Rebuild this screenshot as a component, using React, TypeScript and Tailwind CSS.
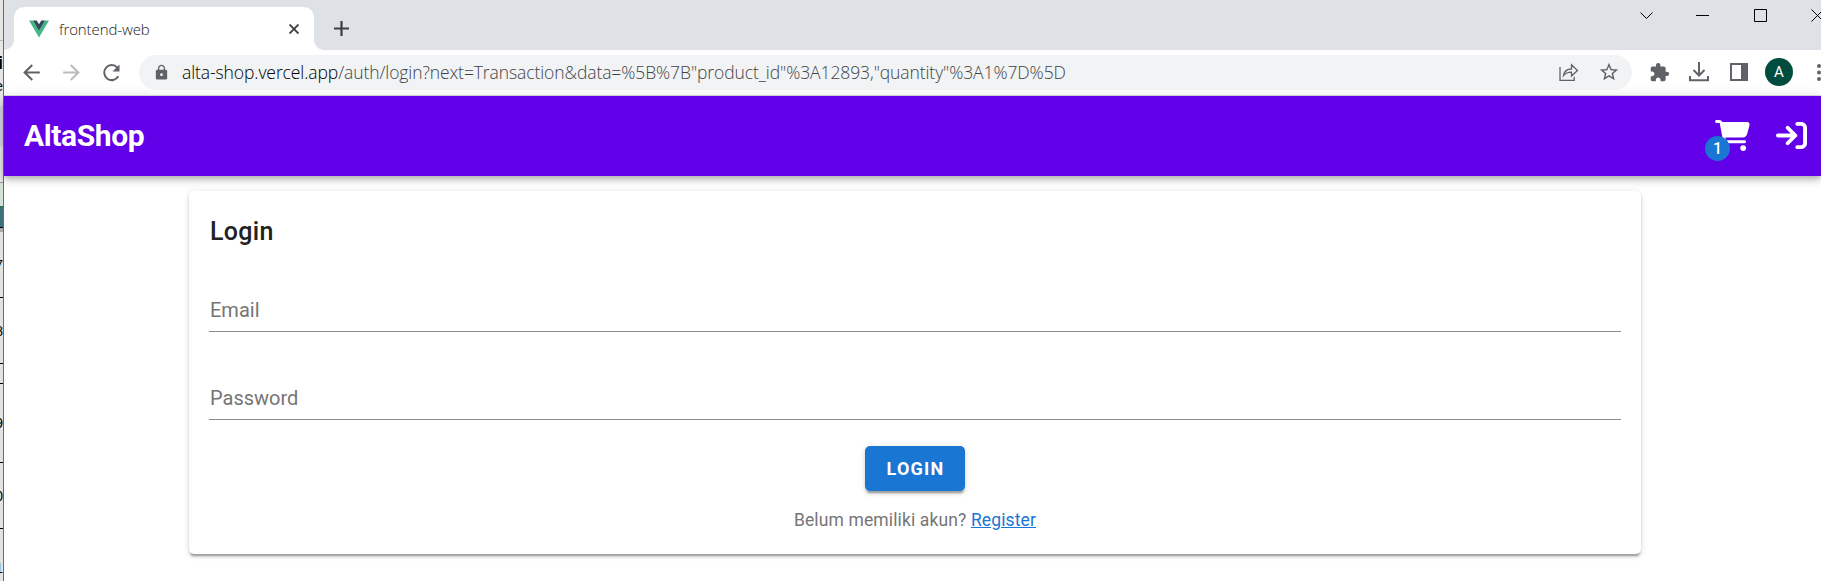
import { FaCartShopping, FaArrowRightToBracket } from "react-icons/fa6";
import { MdArrowBack, MdArrowForward, MdLock, MdStarBorder, MdExtension } from "react-icons/md";

const roboto = "font-['Roboto',sans-serif]";

function BackgroundWindow() {
  return (
    <div className="flex h-[581px] w-1 shrink-0 flex-col overflow-hidden border-r border-[#6b6b6b] bg-[#e4e3e1] font-['Liberation_Sans',sans-serif] text-[14px] leading-5 text-black">
      <div className="h-10 shrink-0 bg-[#e6e4e2]" />
      <div className="h-px shrink-0 bg-[#b5b5b5]" />
      <div className="flex h-[65px] shrink-0 flex-col items-end bg-[#e6e6e6] pt-[10px]">
        <span className="text-[18px] font-bold leading-[24px]">i</span>
        <span className="leading-[22px]">e</span>
      </div>
      <div className="h-10 shrink-0 bg-[#d3d7e0]" />
      <div className="h-9 shrink-0 bg-[#e6e6e6]" />
      <div className="h-px shrink-0 bg-[#9a9a9a]" />
      <div className="h-[23px] shrink-0 bg-[#d3e2d6]" />
      <div className="h-[21px] shrink-0 border-t border-[#1e7145] bg-[#40707a]" />
      <div className="h-px shrink-0 bg-black" />
      <div className="h-1 shrink-0 bg-[#aaa]" />
      <div className="flex h-[66px] shrink-0 items-center justify-end border-b border-black">7</div>
      <div className="flex h-[66px] shrink-0 items-center justify-end border-b border-black">8</div>
      <div className="h-5 shrink-0 border-b border-black" />
      <div className="flex h-[79px] shrink-0 items-center justify-end border-b border-black">9</div>
      <div className="flex h-[66px] shrink-0 items-center justify-end border-b border-black">0</div>
      <div className="flex h-[52px] shrink-0 items-end justify-end pb-[3px]">1</div>
    </div>
  );
}

function TabStrip() {
  return (
    <div className="flex h-[50px] bg-[#dee1e6]">
      <div className="flex w-[10px] items-end bg-white">
        <div className="h-full w-full rounded-br-[10px] bg-[#dee1e6]" />
      </div>
      <div className="bg-[#dee1e6]">
        <div className="flex h-[50px] w-[300px] items-center bg-white pt-2 [clip-path:inset(7px_0_0_0_round_10px_10px_0_0)]">
          <svg className="ml-[15px] h-5 w-5" viewBox="0 0 20 20">
            <path d="M0 1.500h4L10 12l6-10.500h4L10 18.500z" fill="#41b883" />
            <path d="M4 1.500h3.700L10 5.300l2.300-3.800H16L10 12z" fill="#35495e" />
          </svg>
          <span className="ml-[10px] flex-1 whitespace-nowrap font-['Open_Sans',sans-serif] text-[15px] font-light tracking-[-0.1px] text-[#202124]">frontend-web</span>
          <svg className="mr-[15px] h-[10px] w-[10px]" viewBox="0 0 10 10" stroke="#3c4043" strokeWidth="1.900">
            <path d="M.5.5l9 9M9.500.5l-9 9" />
          </svg>
        </div>
      </div>
      <div className="flex flex-1 bg-white">
        <div className="flex flex-1 rounded-bl-[10px] bg-[#dee1e6]">
          <svg className="ml-5 mt-[21px] h-[15px] w-[15px]" viewBox="0 0 15 15" stroke="#3c4043" strokeWidth="2.200">
            <path d="M0 7.500h15M7.500 0v15" />
          </svg>
          <svg className="ml-auto mt-[8px] h-4 w-[181px]" viewBox="0 0 181 16" fill="none" stroke="#000" strokeWidth="1">
            <path d="M.5 4.500l6 6 6-6" />
            <path d="M56 7.500h13" />
            <path d="M114.500 1.500h12v12h-12z" />
            <path d="M171.500 1.500l12 12M171.500 13.500l12-12" />
          </svg>
        </div>
      </div>
    </div>
  );
}

function Toolbar() {
  return (
    <div className="flex h-[46px] items-center border-b border-[#dadce0] bg-white pb-px text-[#5f6368]">
      <MdArrowBack className="ml-[15px] h-[25px] w-[25px] shrink-0" />
      <MdArrowForward className="ml-[15px] h-[25px] w-[25px] shrink-0 text-[#babcbe]" />
      <svg className="ml-[15px] h-[25px] w-[25px] shrink-0" viewBox="0 0 25 25" fill="none" stroke="#5f6368" strokeWidth="2">
        <path d="M19.300 16.200A7.500 7.500 0 1 1 18.300 7.600" />
        <path d="M20.500 4.500v7h-7z" fill="#5f6368" stroke="none" />
      </svg>
      <div className="ml-[15px] flex h-[35px] w-[1493px] shrink-0 items-center rounded-full bg-[#f1f3f4]">
        <MdLock className="ml-[14px] h-[17px] w-[17px]" />
        <span className="ml-[12px] whitespace-nowrap pt-px font-['Open_Sans',sans-serif] text-[17.500px] font-light tracking-[-0.090px] text-[#3f4347]">
          <span className="text-black">alta-shop.vercel.app</span>
          {'/auth/login?next=Transaction&data=%5B%7B"product_id"%3A12893,"quantity"%3A1%7D%5D'}
        </span>
        <svg className="ml-auto h-5 w-5" viewBox="0 0 20 20" fill="none" stroke="#5f6368" strokeWidth="1.300">
          <path d="M1 5v13.300h14.200v-3.500" />
          <path d="M4.500 13.500c.7-4.500 3.300-6.500 8-6.500V2.800l6 5.700-6 5.500v-3.800c-3.500 0-6 .8-8 3.300z" />
        </svg>
        <MdStarBorder className="ml-[19px] mr-[12px] h-[22px] w-[22px]" />
      </div>
      <MdExtension className="ml-[17px] h-[21px] w-[21px] shrink-0" />
      <svg className="ml-[19px] h-5 w-5 shrink-0" viewBox="0 0 20 20" fill="none" stroke="#5f6368" strokeWidth="2">
        <path d="M10 0v13M4.500 8l5.500 5.500L15.500 8" />
        <path d="M1 14v4.300h18V14" />
      </svg>
      <svg className="ml-[21px] h-[18px] w-[18px] shrink-0" viewBox="0 0 18 18" fill="none" stroke="#5f6368" strokeWidth="2">
        <path d="M1 1h16v16H1z" />
        <path d="M12 1h5v16h-5z" fill="#5f6368" />
      </svg>
      <div className={`ml-[17px] flex h-7 w-7 shrink-0 items-center justify-center rounded-full bg-[#004d40] pt-px text-[15px] text-white ${roboto}`}>A</div>
      <svg className="ml-auto h-5 w-[5px] shrink-0" viewBox="0 0 5 20" fill="#5f6368">
        <circle cx="3" cy="4" r="2" />
        <circle cx="3" cy="10.500" r="2" />
        <circle cx="3" cy="17" r="2" />
      </svg>
    </div>
  );
}

function AppBar() {
  return (
    <header className="flex h-20 items-center bg-[#6200ea] pl-5 pr-[14px] text-white shadow-[0_2.500px_5px_-1.250px_rgba(0,0,0,0.2),0_5px_6.250px_rgba(0,0,0,0.14),0_1.250px_12.500px_rgba(0,0,0,0.12)]">
      <span className="text-[30px] font-bold leading-none tracking-[-0.400px]">AltaShop</span>
      <div className="relative mb-px ml-auto mr-[26px]">
        <FaCartShopping className="h-[31px] w-[35px]" />
        <span className="absolute -left-[10px] top-4 flex h-[25px] w-[25px] items-center justify-center rounded-full bg-[#1976d2] text-[16px] font-medium leading-none">1</span>
      </div>
      <FaArrowRightToBracket className="mb-px h-[31px] w-[31px]" />
    </header>
  );
}

function Field({ label }: { label: string }) {
  return (
    <label className="flex h-[70px] items-center border-b border-[#8f8f8f] pl-px pt-[27px] text-[20px] text-[#757575]">
      {label}
    </label>
  );
}

function LoginCard() {
  return (
    <main className="ml-[185px] mt-[15px] flex h-[363px] w-[1452px] flex-col rounded-[5px] bg-white px-5 shadow-[0_3.750px_1.250px_-2.500px_rgba(0,0,0,0.2),0_2.500px_2.500px_rgba(0,0,0,0.14),0_1.250px_6.250px_rgba(0,0,0,0.12)]">
      <h1 className="mt-[21px] pl-px text-[25px] font-medium leading-10 tracking-[0.3px] text-[#212121]">Login</h1>
      <div className="mt-[10px]">
        <Field label="Email" />
      </div>
      <div className="mt-[18px]">
        <Field label="Password" />
      </div>
      <button className="mt-[26px] h-[45px] w-[100px] self-center rounded-[5px] bg-[#1976d2] pl-px text-[18px] font-bold tracking-[1.200px] text-white shadow-[0_3.750px_1.250px_-2.500px_rgba(0,0,0,0.2),0_2.500px_2.500px_rgba(0,0,0,0.14),0_1.250px_6.250px_rgba(0,0,0,0.12)]">
        LOGIN
      </button>
      <p className="mt-[17px] text-center text-[17.500px] leading-[25px] tracking-[0.130px] text-[#757575]">
        Belum memiliki akun? <a className="text-[#1976d2] underline">Register</a>
      </p>
    </main>
  );
}

export default function App() {
  return (
    <div className="flex h-[581px] w-full overflow-hidden bg-white">
      <BackgroundWindow />
      <div className="min-w-0 flex-1">
        <TabStrip />
        <Toolbar />
        <div className={roboto}>
          <AppBar />
          <LoginCard />
        </div>
      </div>
    </div>
  );
}
